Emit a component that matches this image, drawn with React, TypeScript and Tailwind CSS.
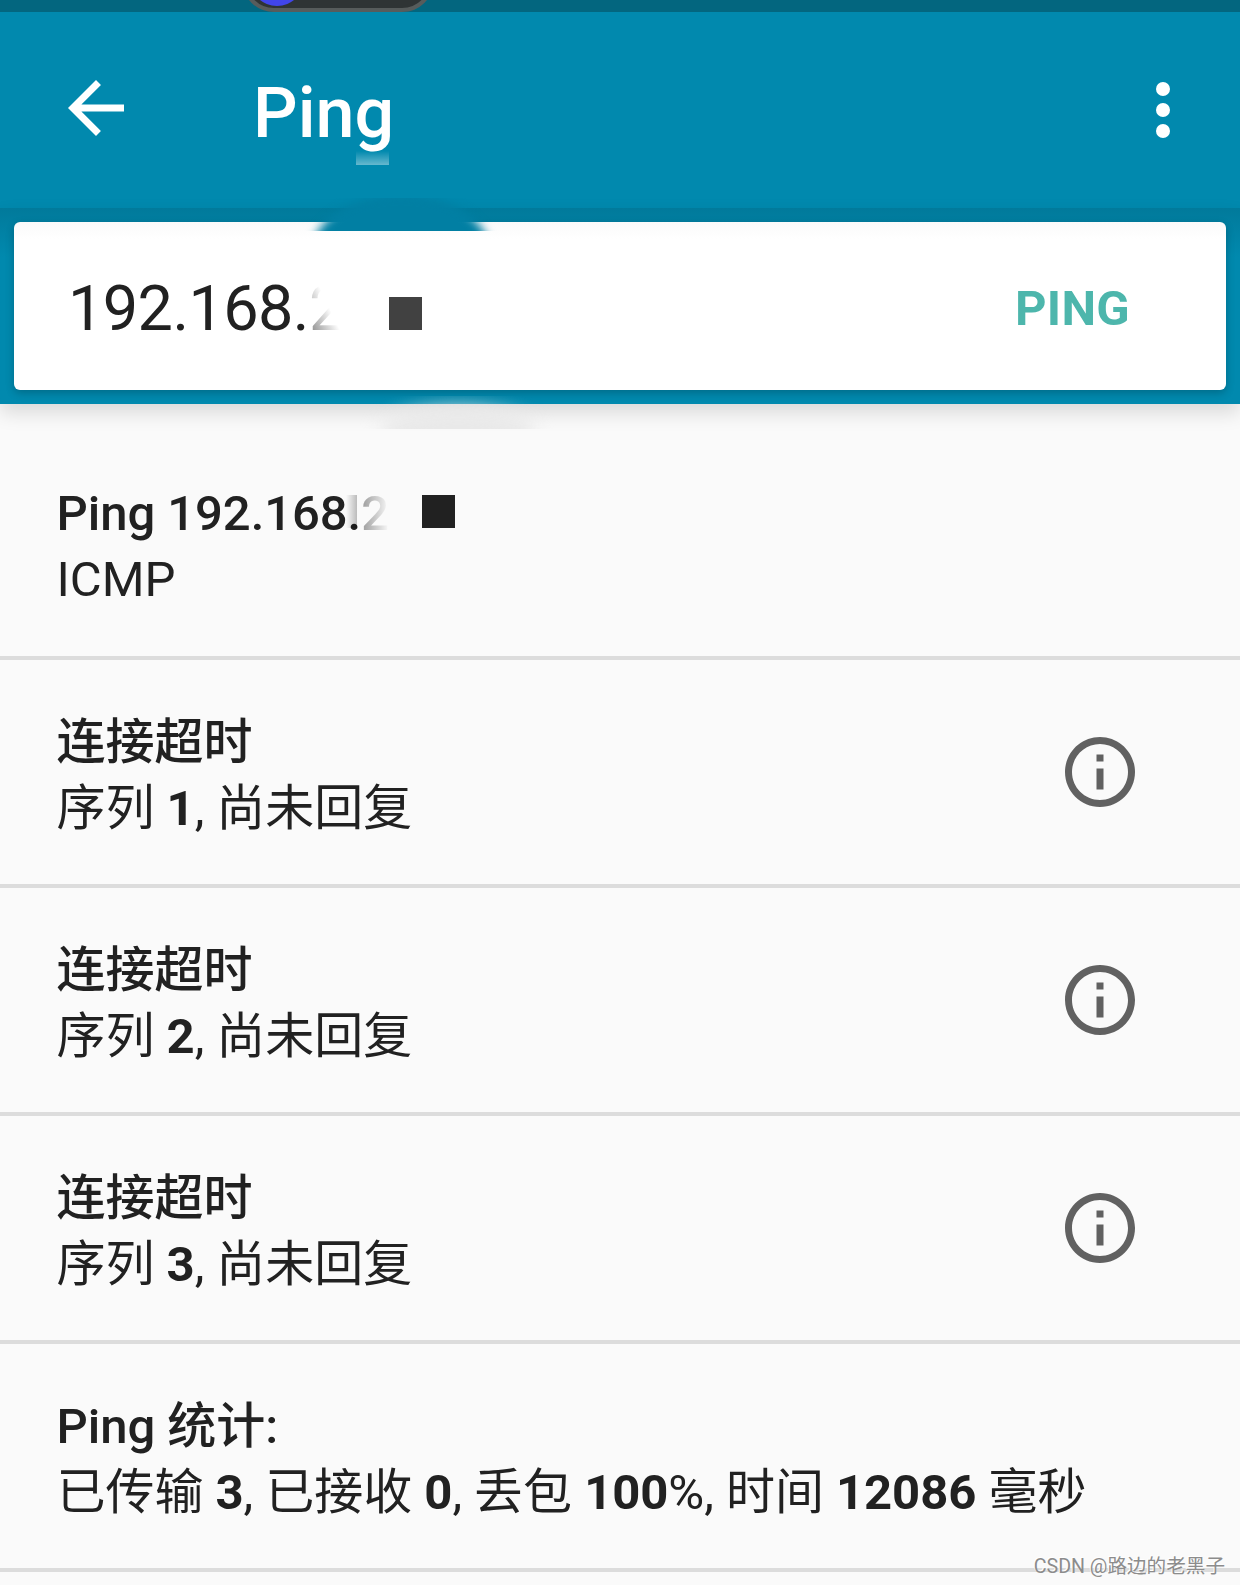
import React from "react";

const sequences = [1, 2, 3];

function BackIcon() {
  return (
    <svg viewBox="0 0 24 24" className="h-[84px] w-[84px]" fill="white">
      <path d="M20 11H7.83l5.59-5.59L12 4l-8 8 8 8 1.41-1.41L7.83 13H20v-2z" />
    </svg>
  );
}

function MoreIcon() {
  return (
    <svg viewBox="0 0 24 24" className="h-[84px] w-[84px]" fill="white">
      <circle cx="12" cy="6" r="2" />
      <circle cx="12" cy="12" r="2" />
      <circle cx="12" cy="18" r="2" />
    </svg>
  );
}

function InfoIcon() {
  return (
    <svg viewBox="0 0 24 24" className="h-[84px] w-[84px]" fill="#616161">
      <path d="M11 7h2v2h-2zm0 4h2v6h-2zm1-9C6.48 2 2 6.48 2 12s4.48 10 10 10 10-4.48 10-10S17.52 2 12 2zm0 18c-4.41 0-8-3.59-8-8s3.59-8 8-8 8 3.59 8 8-3.59 8-8 8z" />
    </svg>
  );
}

function StatusBar() {
  return (
    <div className="relative h-3 overflow-hidden bg-[#03667f]">
      <div className="absolute bottom-0 left-[242px] h-[64px] w-[192px] overflow-hidden rounded-full border-4 border-[#575c5c] bg-[#2f3435]">
        <div className="absolute bottom-[2px] left-[4px] h-[54px] w-[54px] rounded-full bg-[#4145ea]" />
      </div>
    </div>
  );
}

function Row({ children, icon }: { children: React.ReactNode; icon?: boolean }) {
  return (
    <div className="flex h-[228px] items-start justify-between border-b-4 border-[#dcdcdc] pt-[50px] pr-[98px] pl-[56.5px]">
      <div className="leading-[66px] tracking-[-0.04px] whitespace-nowrap">{children}</div>
      {icon && (
        <div className="mt-5">
          <InfoIcon />
        </div>
      )}
    </div>
  );
}

export default function App() {
  return (
    <div className="relative h-[1585px] w-[1240px] overflow-hidden bg-[#fafafa] font-[Roboto,'Noto_Sans_CJK_SC',sans-serif] text-[49px] text-[#212121]">
      <StatusBar />

      <header className="flex h-[196px] items-center bg-[#0189ae] pr-[35px] pl-[54px]">
        <div className="-mt-[4px]">
          <BackIcon />
        </div>
        <h1 className="relative mt-[6px] ml-[115px] flex-1 text-[70px] leading-[82px] font-medium text-white">
          Ping
          <span className="absolute top-[79px] left-[103px] h-[14px] w-[33px] bg-gradient-to-b from-white/0 to-white/40" />
        </h1>
        <MoreIcon />
      </header>

      <section className="relative h-[196px] bg-[#0189ae] bg-gradient-to-b from-[#017a9b] to-[#0189ae] to-25% px-[14px] pt-[14px] shadow-[0_9px_18px_rgba(0,0,0,0.13)]">
        <div className="flex h-[168px] items-center justify-between rounded-[6px] bg-white bg-gradient-to-b from-[#fafafa] to-white to-10% pr-[96px] pl-[54px] shadow-[0_3px_8px_rgba(0,0,0,0.22)]">
          <div className="flex items-center pt-[6px] text-[63px] leading-[74px]">
            <span className="tracking-[-0.6px]">192.168.</span>
            <span className="bg-gradient-to-tr from-[#888] from-10% to-white to-55% bg-clip-text text-transparent">2</span>
            <span className="mt-[8px] ml-[45px] h-[33px] w-[33px] bg-[#414141]" />
          </div>
          <button className="pt-[6px] font-bold tracking-[0.3px] text-[#4db6ac]">PING</button>
        </div>
        <div className="absolute -top-[10px] left-[292px] h-[33px] w-[220px] overflow-hidden">
          <div className="absolute -top-[4px] left-[18px] h-[70px] w-[182px] rounded-[50%_50%_0_0/90%_90%_0_0] bg-[#017fa3] blur-[5px]" />
        </div>
        <div className="absolute top-[188px] left-[360px] h-[33px] w-[200px] overflow-hidden">
          <div className="absolute top-[11px] left-[20px] h-[50px] w-[156px] rounded-[50%] bg-[#e9e9e9] blur-[9px]" />
        </div>
      </section>

      <main>
        <div className="h-[256px] border-b-4 border-[#dcdcdc] pt-[77px] pl-[56.5px] leading-[66px]">
          <div className="flex items-center font-medium tracking-[-0.05px] whitespace-pre">
            <span>Ping 192.168</span>
            <span className="relative">
              .
              <span className="absolute top-[14px] -left-[2px] h-[33px] w-[11px] bg-gradient-to-r from-black/0 to-black/25" />
            </span>
            <span className="bg-gradient-to-r from-[#999] to-[#fafafa] to-100% bg-clip-text text-transparent">2</span>
            <span className="-mt-[6px] ml-[33px] h-[33px] w-[33px] bg-[#212121]" />
          </div>
          <div>ICMP</div>
        </div>

        {sequences.map((n) => (
          <Row key={n} icon>
            <div className="font-medium">连接超时</div>
            <div>
              序列 <b>{n}</b>, 尚未回复
            </div>
          </Row>
        ))}

        <Row>
          <div className="font-medium">Ping 统计:</div>
          <div>
            已传输 <b>3</b>, 已接收 <b>0</b>, 丢包 <b>100</b>%, 时间 <b>12086</b> 毫秒
          </div>
        </Row>
      </main>

      <div className="absolute right-[15px] bottom-[6px] text-[19.6px] leading-6 whitespace-nowrap text-[#8c8c8c] [text-shadow:-1px_-1px_0_#fff]">
        CSDN @路边的老黑子
      </div>
    </div>
  );
}
